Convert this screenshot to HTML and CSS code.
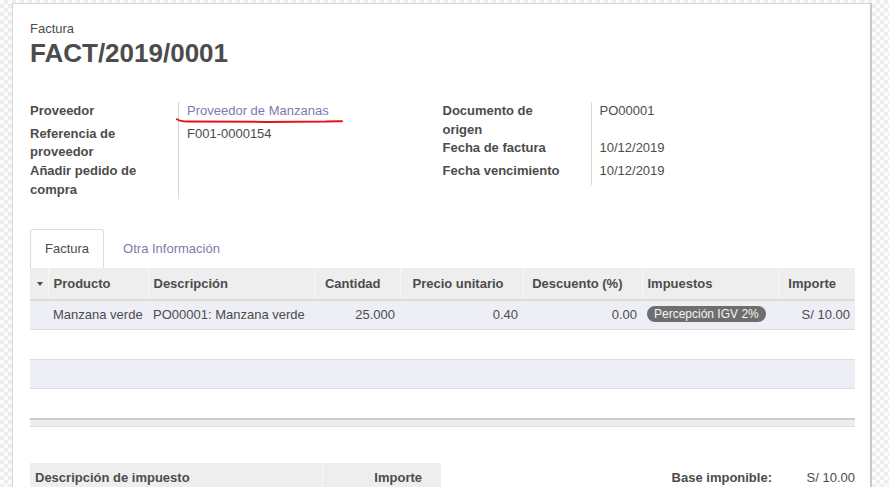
FILE: index.html
```html
<!DOCTYPE html>
<html lang="es">
<head>
<meta charset="utf-8">
<title>FACT/2019/0001</title>
<link rel="stylesheet" href="styles.css">
</head>
<body>
<div class="sheet">
  <div class="title">
    <div class="kind">Factura</div>
    <h1 class="name">FACT/2019/0001</h1>
  </div>

  <div class="groups">
    <div class="group">
      <div class="frow">
        <div class="lbl">Proveedor</div>
        <div class="val val-mark">
          <a class="link">Proveedor de Manzanas</a>
          <svg class="mark" width="168" height="8" viewBox="0 0 168 8" aria-hidden="true">
            <path d="M1,3.2 Q4,5.4 12,5.6 L90,5.9 L150,5.4 Q160,5 166,5.2" fill="none" stroke="#e5121b" stroke-width="2" stroke-linecap="round"/>
          </svg>
        </div>
      </div>
      <div class="frow">
        <div class="lbl">Referencia de proveedor</div>
        <div class="val">F001-0000154</div>
      </div>
      <div class="frow">
        <div class="lbl">Añadir pedido de compra</div>
        <div class="val"></div>
      </div>
    </div>
    <div class="group">
      <div class="frow">
        <div class="lbl">Documento de origen</div>
        <div class="val">PO00001</div>
      </div>
      <div class="frow">
        <div class="lbl">Fecha de factura</div>
        <div class="val">10/12/2019</div>
      </div>
      <div class="frow">
        <div class="lbl">Fecha vencimiento</div>
        <div class="val">10/12/2019</div>
      </div>
    </div>
  </div>

  <div class="tabs">
    <div class="tab active">Factura</div>
    <div class="tab">Otra Información</div>
  </div>

  <table class="lines">
    <colgroup>
      <col class="c-caret"><col class="c-prod"><col class="c-desc"><col class="c-qty">
      <col class="c-price"><col class="c-disc"><col class="c-tax"><col class="c-amt">
    </colgroup>
    <thead>
      <tr>
        <th class="caret"><span class="caret-icon"></span></th>
        <th>Producto</th>
        <th>Descripción</th>
        <th class="num">Cantidad</th>
        <th class="num">Precio unitario</th>
        <th class="num">Descuento (%)</th>
        <th>Impuestos</th>
        <th class="num">Importe</th>
      </tr>
    </thead>
    <tbody>
      <tr>
        <td></td>
        <td>Manzana verde</td>
        <td>PO00001: Manzana verde</td>
        <td class="num">25.000</td>
        <td class="num">0.40</td>
        <td class="num">0.00</td>
        <td><span class="badge">Percepción IGV 2%</span></td>
        <td class="num">S/ 10.00</td>
      </tr>
      <tr><td colspan="8">&nbsp;</td></tr>
      <tr><td colspan="8">&nbsp;</td></tr>
      <tr><td colspan="8">&nbsp;</td></tr>
    </tbody>
  </table>
  <div class="lines-foot"></div>

  <div class="summary">
    <table class="taxes">
      <colgroup><col class="c-tdesc"><col class="c-tamt"></colgroup>
      <thead>
        <tr>
          <th>Descripción de impuesto</th>
          <th class="num">Importe</th>
        </tr>
      </thead>
    </table>
    <div class="totals">
      <div class="t-lbl">Base imponible:</div>
      <div class="t-val">S/ 10.00</div>
    </div>
  </div>
</div>
</body>
</html>
```

FILE: styles.css
```css
html, body {
  margin: 0;
  padding: 0;
}
body {
  background-color: #fbfbfb;
  background-image: repeating-conic-gradient(#ededed 0 25%, #fbfbfb 0 50%);
  background-size: 8px 8px;
  font-family: "Liberation Sans", Arial, sans-serif;
  font-size: 13px;
  line-height: 18.57px;
  color: #4c4c4c;
  overflow: hidden;
}
.sheet {
  box-sizing: border-box;
  width: 860px;
  min-height: 520px;
  margin: 3px 0 0 12px;
  padding: 16px 15px 40px 17px;
  background: #fff;
  border-top: 1px solid #d6d6d6;
  border-left: 1px solid #d6d6d6;
  border-right: 2px solid #c7c7cf;
}
.kind {
  line-height: 18.57px;
}
.name {
  margin: 0;
  font-size: 26px;
  line-height: 28.6px;
  font-weight: bold;
}
.groups {
  display: flex;
  margin-top: 34.8px;
}
.group {
  flex: 1 1 0;
}
.frow {
  display: flex;
}
.lbl {
  flex: none;
  box-sizing: border-box;
  width: 149px;
  padding-right: 20px;
  border-right: 1px solid #d9d9d9;
  font-weight: bold;
}
.val {
  flex: 1;
  padding: 0 0 4.4px 8px;
}
.val-mark {
  position: relative;
}
.link {
  color: #7c7bad;
  text-decoration: none;
}
.mark {
  position: absolute;
  left: -3px;
  top: 14px;
}
.tabs {
  display: flex;
  margin-top: 30px;
}
.tab {
  padding: 10px 14px 9px;
  margin-right: 4px;
  border: 1px solid transparent;
  border-bottom: 0;
  border-radius: 3px 3px 0 0;
  color: #7c7bad;
}
.tab.active {
  border-color: #dddddd;
  color: #4c4c4c;
}
.lines {
  width: 825px;
  border-collapse: collapse;
  table-layout: fixed;
}
.c-caret { width: 18px; }
.c-prod { width: 100px; }
.c-desc { width: 166px; }
.c-qty { width: 86px; }
.c-price { width: 123px; }
.c-disc { width: 119px; }
.c-tax { width: 136px; }
.c-amt { width: 77px; }
.lines th,
.taxes th {
  background: #eeeeee;
  font-weight: bold;
  text-align: left;
  white-space: nowrap;
  overflow: hidden;
  border-left: 1px solid #f8f8f8;
}
.lines th {
  padding: 7.5px 5px 5px;
  border-bottom: 2px solid #dcdcdc;
}
.lines th:first-child,
.taxes th:first-child {
  border-left: 0;
}
.lines th.num,
.taxes th.num {
  text-align: right;
  padding-right: 19px;
}
.lines th.caret {
  text-align: center;
  padding: 0;
}
.caret-icon {
  display: inline-block;
  width: 0;
  height: 0;
  border-left: 3.5px solid transparent;
  border-right: 3.5px solid transparent;
  border-top: 4px solid #4c4c4c;
  vertical-align: middle;
  margin-left: 3px;
}
.lines td {
  padding: 5px;
  border-bottom: 1px solid #dddddd;
  white-space: nowrap;
  overflow: hidden;
}
.lines tbody tr:nth-child(odd) td {
  background: #eeeef6;
}
.lines tbody tr:last-child td {
  border-bottom: 0;
}
.lines td.num {
  text-align: right;
}
.badge {
  display: inline-block;
  padding: 0 7px;
  border-radius: 9px;
  background: #6e6e6e;
  color: #f4f4f4;
  font-size: 12px;
  line-height: 16px;
  vertical-align: 1px;
}
.lines-foot {
  width: 825px;
  height: 6px;
  background: #eeeeee;
  border-top: 2px solid #cccccc;
  border-bottom: 1px solid #dddddd;
}
.summary {
  display: flex;
  align-items: flex-start;
  width: 825px;
  margin-top: 35.5px;
}
.taxes {
  width: 411px;
  border-collapse: collapse;
  table-layout: fixed;
}
.c-tdesc { width: 292px; }
.c-tamt { width: 119px; }
.taxes th {
  padding: 6px 5px 5px;
}
.totals {
  margin-left: auto;
  display: grid;
  grid-template-columns: auto 83px;
  padding-top: 6px;
}
.t-lbl {
  font-weight: bold;
  text-align: right;
}
.t-val {
  text-align: right;
}
```
